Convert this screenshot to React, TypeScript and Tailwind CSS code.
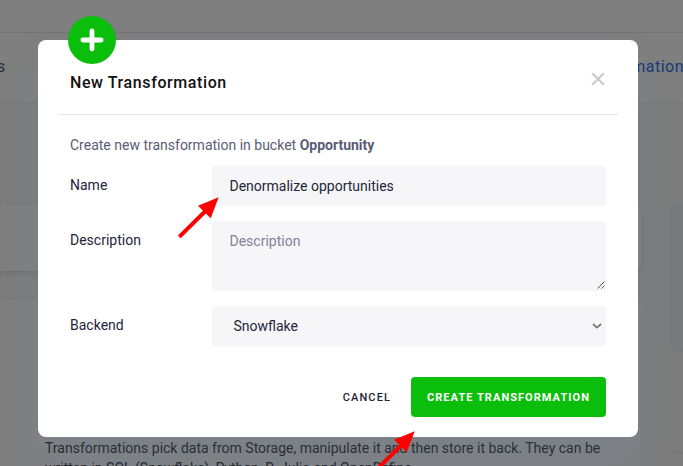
import React from "react";

function Arrow({ className }: { className: string }) {
  return (
    <svg className={className} width="44" height="44" viewBox="0 0 44 44" fill="none">
      <path d="M2.3 40.8L29 14.5" stroke="#ff0000" strokeWidth="4" />
      <path d="M41.7 1.3L21 9.7L33.7 22.3Z" fill="#ff0000" />
    </svg>
  );
}

function PageBehind() {
  return (
    <div className="flex h-full w-full flex-col bg-[#f8f8f8]">
      <div className="h-[33px] shrink-0 border-b border-[#e3e9f3] bg-white" />
      <div className="flex h-[68px] shrink-0 items-center justify-between bg-white pb-px text-[16px] tracking-[0.5px] shadow-[0_1px_3px_rgba(0,0,0,0.03)]">
        <span className="-ml-[3px] text-[#5a5c75]">s</span>
        <span className="-mr-[1px] text-[#2f74f0]">mation</span>
      </div>
      <div className="flex min-h-0 grow">
        <div className="flex w-[641px] flex-col pt-[104px]">
          <div className="h-[66px] shrink-0 rounded-r-[8px] bg-white shadow-[0_2px_5px_rgba(0,20,60,0.12)]" />
          <div className="mt-[28px] grow rounded-tr-[8px] border-t border-[#eeeeef] bg-white pt-[138px] pl-[45px] text-[14px] leading-[20px] whitespace-nowrap text-[#32363c]">
            <p>Transformations pick data from Storage, manipulate it and then store it back. They can be</p>
            <p>written in SQL (Snowflake), Python, R, Julia and OpenRefine.</p>
          </div>
        </div>
        <div className="flex grow flex-col pt-[104px] pl-[30px]">
          <div className="h-[147px] rounded-l-[8px] border border-r-0 border-[#e6ebf2] bg-[#f1f3f6]" />
          <div className="mt-[100px] h-px bg-[#e4e8ef]" />
        </div>
      </div>
    </div>
  );
}

const labelClass = "w-[142px] shrink-0 pt-[9px]";
const fieldClass = "w-[394px] rounded-[4px] bg-[#f6f6f9]";

function Modal() {
  return (
    <div className="absolute top-[40px] left-[38px] flex h-[397px] w-[600px] flex-col rounded-[8px] bg-white px-[20px] shadow-[0_30px_40px_rgba(119,143,173,0.22)]">
      <div className="absolute top-[-24px] left-[30px] flex size-[48px] items-center justify-center rounded-full bg-[#0bbe0b]">
        <svg width="24" height="24" viewBox="0 0 24 24">
          <path d="M12 2.9V21.1M2.9 12H21.1" stroke="#fff" strokeWidth="4.8" strokeLinecap="round" />
        </svg>
      </div>
      <header className="flex h-[75px] shrink-0 items-center justify-between border-b border-[#e7e7ea] px-[12px] pt-[10px]">
        <h1 className="pt-[2px] text-[16px] leading-[20px] font-medium tracking-[0.6px] text-[#111]">New Transformation</h1>
        <svg className="mt-[-6px] mr-[1px]" width="14" height="14" viewBox="0 0 14 14" fill="none">
          <path d="M1.2 1.2L12.8 12.8M12.8 1.2L1.2 12.8" stroke="#ccc" strokeWidth="2.3" />
        </svg>
      </header>
      <div className="flex flex-col px-[12px] pt-[20px] text-[14px] leading-[20px] text-[#25253a]">
        <p className="text-[#5a5c75]">
          Create new transformation in bucket <b className="font-bold">Opportunity</b>
        </p>
        <div className="mt-[11px] flex">
          <label className={labelClass}>Name</label>
          <div className={`${fieldClass} h-[40px] pt-[10px] pl-[17.5px]`}>Denormalize opportunities</div>
        </div>
        <div className="mt-[15px] flex">
          <label className={labelClass}>Description</label>
          <div className={`${fieldClass} flex h-[70px] justify-between pt-[10px] pl-[17.5px] text-[#85809a]`}>
            <span>Description</span>
            <svg className="mr-[1px] mb-[2px] self-end" width="8" height="8" viewBox="0 0 8 8">
              <path d="M0.5 7.5L7.5 0.5M4.5 7.5L7.5 4.5" stroke="#444" strokeWidth="0.9" />
            </svg>
          </div>
        </div>
        <div className="mt-[15px] flex">
          <label className={labelClass}>Backend</label>
          <div className={`${fieldClass} flex h-[40px] items-center justify-between pr-[4px] pl-[21.5px]`}>
            <span>Snowflake</span>
            <svg width="10" height="6" viewBox="0 0 10 6" fill="none">
              <path d="M1 1L5 4.6L9 1" stroke="#777" strokeWidth="1.8" />
            </svg>
          </div>
        </div>
      </div>
      <footer className="mt-[31px] flex h-[40px] items-center justify-end pr-[12px] text-[11px]">
        <button className="mr-[20px] pt-[2px] font-medium tracking-[1.1px] text-[#25253a]">CANCEL</button>
        <button className="h-[40px] w-[195px] rounded-[4px] bg-[#0bbe0b] pt-[2px] font-bold tracking-[1.05px] whitespace-nowrap text-white">CREATE TRANSFORMATION</button>
      </footer>
    </div>
  );
}

export default function App() {
  return (
    <main className="relative h-[466px] w-[683px] overflow-hidden bg-white font-['Roboto',sans-serif]">
      <PageBehind />
      <div className="absolute inset-0 bg-black/50" />
      <Modal />
      <Arrow className="absolute top-[196px] left-[177px]" />
      <Arrow className="absolute top-[430px] left-[373px]" />
    </main>
  );
}
